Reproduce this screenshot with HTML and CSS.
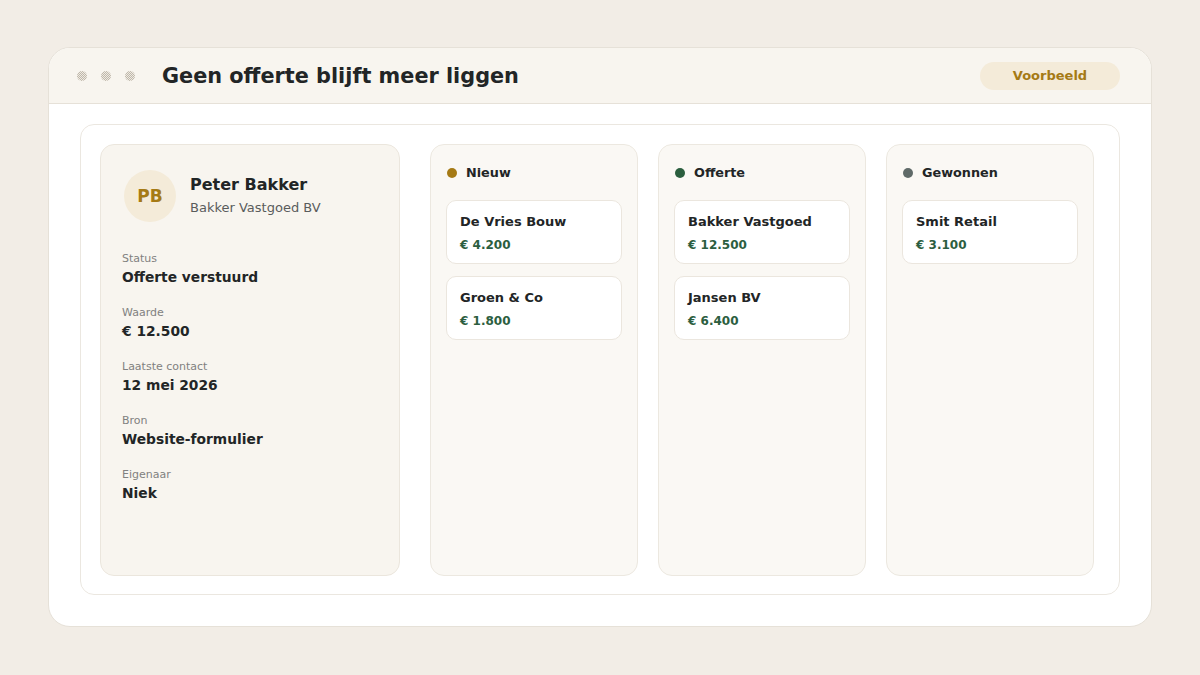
FILE: index.html
```html
<!DOCTYPE html>
<html lang="nl">
<head>
    <meta charset="UTF-8">
    <meta name="viewport" content="width=device-width, initial-scale=1.0">
    <title>Geen offerte blijft meer liggen</title>
    <link rel="stylesheet" href="styles.css">
</head>
<body>

<div class="window">
    <div class="titlebar">
        <div class="dots">
            <span class="dot"></span>
            <span class="dot"></span>
            <span class="dot"></span>
        </div>
        <h1>Geen offerte blijft meer liggen</h1>
        <span class="badge">Voorbeeld</span>
    </div>

    <div class="window-body">
        <div class="panel">
            <div class="contact">
                <div class="person">
                    <div class="avatar">PB</div>
                    <div>
                        <div class="name">Peter Bakker</div>
                        <div class="company">Bakker Vastgoed BV</div>
                    </div>
                </div>

                <div class="field">
                    <div class="label">Status</div>
                    <div class="value">Offerte verstuurd</div>
                </div>
                <div class="field">
                    <div class="label">Waarde</div>
                    <div class="value">€ 12.500</div>
                </div>
                <div class="field">
                    <div class="label">Laatste contact</div>
                    <div class="value">12 mei 2026</div>
                </div>
                <div class="field">
                    <div class="label">Bron</div>
                    <div class="value">Website-formulier</div>
                </div>
                <div class="field">
                    <div class="label">Eigenaar</div>
                    <div class="value">Niek</div>
                </div>
            </div>

            <div class="column">
                <div class="column-head"><span class="stage-dot new"></span>Nieuw</div>
                <div class="deal">
                    <div class="deal-name">De Vries Bouw</div>
                    <div class="deal-amount">€ 4.200</div>
                </div>
                <div class="deal">
                    <div class="deal-name">Groen &amp; Co</div>
                    <div class="deal-amount">€ 1.800</div>
                </div>
            </div>

            <div class="column">
                <div class="column-head"><span class="stage-dot quote"></span>Offerte</div>
                <div class="deal">
                    <div class="deal-name">Bakker Vastgoed</div>
                    <div class="deal-amount">€ 12.500</div>
                </div>
                <div class="deal">
                    <div class="deal-name">Jansen BV</div>
                    <div class="deal-amount">€ 6.400</div>
                </div>
            </div>

            <div class="column">
                <div class="column-head"><span class="stage-dot won"></span>Gewonnen</div>
                <div class="deal">
                    <div class="deal-name">Smit Retail</div>
                    <div class="deal-amount">€ 3.100</div>
                </div>
            </div>
        </div>
    </div>
</div>

</body>
</html>
```

FILE: styles.css
```css
body {
    margin: 0;
    padding: 47px 48px;
    background: #f2ede6;
    font-family: "DejaVu Sans", Verdana, sans-serif;
    color: #222526;
}

.window {
    height: 580px;
    box-sizing: border-box;
    background: #fff;
    border: 1px solid #e6e1d8;
    border-radius: 22px;
    overflow: hidden;
}

.titlebar {
    display: flex;
    align-items: center;
    height: 56px;
    box-sizing: border-box;
    padding: 0 31px 0 28px;
    background: #f8f5ef;
    border-bottom: 1px solid #e6e1d8;
}
.dots { display: flex; gap: 14px; margin-right: 27px; }
.dot {
    width: 10px; height: 10px; border-radius: 50%;
    background: repeating-conic-gradient(#beb7ab 0 25%, #efeae1 0 50%) 0 0 / 2px 2px;
}
.titlebar h1 {
    flex: 1;
    margin: 0;
    font-size: 20.8px;
    font-weight: bold;
}
.badge {
    width: 140px;
    height: 28px;
    line-height: 28px;
    text-align: center;
    border-radius: 14px;
    background: #f4ebd9;
    color: #a57a15;
    font-size: 13px;
    font-weight: bold;
}

.window-body { padding: 20px 31px 0 31px; }

.panel {
    display: flex;
    align-items: flex-start;
    height: 471px;
    box-sizing: border-box;
    padding: 19px;
    border: 1px solid #ebe7e0;
    border-radius: 14px;
}

.contact {
    width: 300px;
    height: 432px;
    box-sizing: border-box;
    margin-right: 30px;
    padding: 25px 21px;
    background: #f8f5ef;
    border: 1px solid #ebe6dd;
    border-radius: 14px;
}
.person { display: flex; align-items: center; margin-left: 2px; margin-bottom: 30px; }
.avatar {
    width: 52px; height: 52px; border-radius: 50%;
    background: #f4ebd9;
    color: #a57a15;
    font-size: 17px; font-weight: bold;
    display: flex; align-items: center; justify-content: center;
    margin-right: 14px;
}
.name { font-size: 16px; font-weight: bold; margin-bottom: 6px; margin-top: -2px; }
.company { font-size: 13px; color: #5a5c5c; }

.field { margin-bottom: 19px; }
.label { font-size: 11px; color: #818180; line-height: 14px; margin-bottom: 2px; }
.value { font-size: 13.8px; font-weight: bold; line-height: 19px; }

.column {
    width: 208px;
    height: 432px;
    box-sizing: border-box;
    margin-right: 20px;
    padding: 15px;
    background: #faf8f4;
    border: 1px solid #ece8e0;
    border-radius: 14px;
}
.column:last-child { margin-right: 0; }
.column-head {
    display: flex;
    align-items: center;
    height: 25px;
    margin-bottom: 15px;
    padding-left: 1px;
    font-size: 12.8px;
    font-weight: bold;
}
.stage-dot { width: 10px; height: 10px; border-radius: 50%; margin-right: 9px; }
.stage-dot.new { background: #a57a15; }
.stage-dot.quote { background: #2a5e3e; }
.stage-dot.won { background: #5f6a68; }

.deal {
    height: 64px;
    box-sizing: border-box;
    margin-bottom: 12px;
    padding: 13px 13px;
    background: #fff;
    border: 1px solid #ebe6de;
    border-radius: 10px;
}
.deal-name { font-size: 13px; font-weight: bold; line-height: 16px; margin-bottom: 8px; }
.deal-amount { font-size: 12px; font-weight: bold; color: #2c5e3f; line-height: 14px; }
```
